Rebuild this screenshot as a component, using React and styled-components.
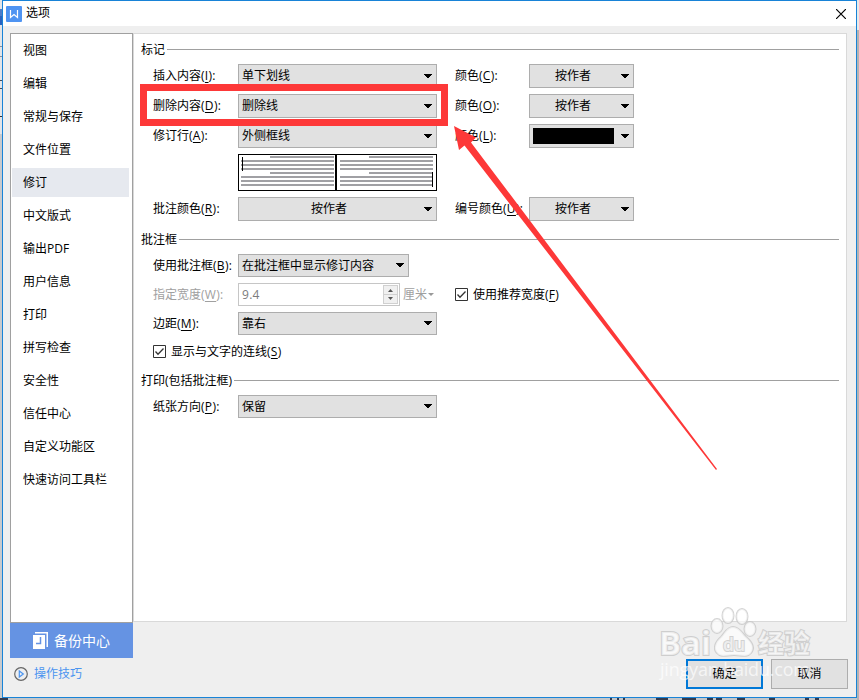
import React from "react";
import styled, { createGlobalStyle, css } from "styled-components";

const Global = createGlobalStyle`
  * { box-sizing: border-box; }
  body {
    margin: 0;
    overflow: hidden;
    font: 12px/16px "Open Sans", "Noto Sans CJK SC", sans-serif;
    color: #000;
  }
  button { font: inherit; color: inherit; }
  u { text-underline-offset: 2px; text-decoration-thickness: 1px; }
`;

const Desktop = styled.div`
  position: relative;
  width: 859px;
  height: 700px;
  padding-left: 2px;
  background:
    linear-gradient(#4c7cc8 0 7px, #2a63bf 7px 16px) 0 9px / 2px 16px no-repeat,
    linear-gradient(#8a8f98, #8a8f98) 0 46px / 2px 1px no-repeat,
    linear-gradient(#8a8f98, #8a8f98) 0 56px / 2px 1px no-repeat,
    linear-gradient(#444b58, #444b58) 0 80px / 2px 1px no-repeat,
    linear-gradient(#444b58, #444b58) 0 88px / 2px 1px no-repeat,
    linear-gradient(#333, #333) 0 116px / 2px 1px no-repeat,
    linear-gradient(#e9e9e9 0 30px, #b3b3b3 30px) 857px 0 / 2px 700px no-repeat,
    linear-gradient(#e2e4e8 0 134px, #c8cacd 134px) 0 0 / 2px 700px no-repeat,
    #c3c6c9;
`;

const Dialog = styled.main`
  display: flex;
  flex-direction: column;
  width: 855px;
  height: 698px;
  border: 1px solid #1883d7;
  background: #efefef;
`;

const TitleBar = styled.header`
  display: flex;
  align-items: center;
  height: 25px;
  padding: 0 10px 0 3px;
  background: #fff;
  svg:last-child { margin-left: auto; }
`;

const Title = styled.h1`
  margin: 0 0 1px 4px;
  font-size: 12px;
  font-weight: 400;
`;

const Body = styled.div`
  display: flex;
  align-items: flex-start;
  padding: 7px 0 0 7px;
`;

const Side = styled.aside`
  width: 123px;
`;

const Nav = styled.nav`
  display: flex;
  flex-direction: column;
  gap: 4px;
  height: 590px;
  padding: 2px 3px 0 1px;
  border: 1px solid #a0a0a0;
  background: #fff;
`;

const NavItem = styled.a`
  flex: none;
  height: 29px;
  padding-left: 11px;
  line-height: 30px;
  white-space: nowrap;
  background: ${(p) => (p.$active ? "#e6e9ef" : "transparent")};
`;

const Backup = styled.button`
  display: flex;
  align-items: center;
  width: 100%;
  height: 35px;
  padding: 0 0 0 23px;
  gap: 6px;
  border: 0;
  background: #6593e3;
  color: #fff;
  font-size: 14px;
`;

const Tips = styled.a`
  display: flex;
  align-items: center;
  gap: 6px;
  height: 32px;
  padding-left: 4px;
  color: #4a94f0;
`;

const Panel = styled.section`
  width: 714px;
  height: 589px;
  padding: 7px 7px 0;
  border: 1px solid #d9d9d9;
  background: #fff;
`;

const Legend = styled.h2`
  display: flex;
  align-items: center;
  gap: 2px;
  height: 17px;
  margin: ${(p) => p.$top || 0}px 0 0;
  font-size: 12px;
  font-weight: 400;
  white-space: nowrap;
  &::after {
    content: "";
    flex: 1;
    height: 1px;
    background: #a0a0a0;
  }
`;

const Row = styled.div`
  display: flex;
  align-items: center;
  height: ${(p) => p.$h || 24}px;
  margin-top: ${(p) => p.$top}px;
  padding-left: 12px;
`;

const Label = styled.label`
  flex: none;
  width: ${(p) => p.$w || 85}px;
  white-space: nowrap;
  color: ${(p) => (p.$off ? "#a0a0a0" : "#000")};
`;

const Access = styled.span`
  letter-spacing: 0.3px;
`;

const SelectBox = styled.button`
  display: flex;
  align-items: center;
  flex: none;
  width: ${(p) => p.$w}px;
  height: 100%;
  margin-right: ${(p) => p.$gap || 0}px;
  padding: 0 4px 0 3px;
  border: 1px solid #adadad;
  background: #e1e1e1;
`;

const Value = styled.span`
  flex: 1;
  padding-right: ${(p) => (p.$center ? 8 : 0)}px;
  white-space: nowrap;
  line-height: 20px;
  text-align: ${(p) => (p.$center ? "center" : "left")};
`;

const Swatch = styled.span`
  width: 81px;
  height: 16px;
  margin-right: auto;
  background: #000;
`;

const NumberField = styled.div`
  display: flex;
  justify-content: space-between;
  align-items: center;
  width: 162px;
  height: 23px;
  padding: 0 1px 0 3px;
  border: 1px solid #c6c6c6;
  color: #7c7c7c;
  letter-spacing: 0.3px;
`;

const Spinner = styled.span`
  display: grid;
  grid-template-rows: 1fr 1fr;
  width: 15px;
  height: 19px;
  border: 1px solid #d0d0d0;
  background: linear-gradient(#d0d0d0, #d0d0d0) 0 8px / 100% 1px no-repeat #f0f0f0;
  svg { margin: auto; }
`;

const Unit = styled.span`
  display: flex;
  align-items: center;
  gap: 1px;
  width: 52px;
  margin-left: 3px;
  color: #a0a0a0;
`;

const Check = styled.label`
  display: flex;
  align-items: center;
  gap: 5px;
  white-space: nowrap;
`;

const Footer = styled.footer`
  display: flex;
  justify-content: flex-end;
  gap: 8px;
  margin: -31px 8px 0 0;
`;

const FootButton = styled.button`
  width: 77px;
  height: 30px;
  padding: 0;
  background: #e1e1e1;
  border: 1px solid #adadad;
  ${(p) => p.$primary && css`border: 2px solid #0078d7;`}
`;

const Overlay = styled.svg`
  position: absolute;
  left: 0;
  top: 0;
  pointer-events: none;
`;

const Preview = styled.svg`
  display: block;
  margin: 6px 0 0 97px;
`;

const NAV = ["视图", "编辑", "常规与保存", "文件位置", "修订", "中文版式", "输出PDF", "用户信息", "打印", "拼写检查", "安全性", "信任中心", "自定义功能区", "快速访问工具栏"];

const Down = () => (
  <svg width="8" height="5" viewBox="0 0 8 5" shapeRendering="crispEdges">
    <path d="M0 0h8v1H7v1H6v1H5v1H3V3H2V2H1V1H0z" fill="#000" />
  </svg>
);

const Select = ({ w = 199, gap, center, children }) => (
  <SelectBox $w={w} $gap={gap}>
    {children === undefined ? <Swatch /> : <Value $center={center}>{children}</Value>}
    <Down />
  </SelectBox>
);

const Key = ({ text, k }) => <>{text}<Access>(<u>{k}</u>)</Access></>;

const CheckIcon = () => (
  <svg width="13" height="13" viewBox="0 0 13 13">
    <path d="M.5.5h12v12H.5z" fill="#fff" stroke="#333" />
    <path d="M2.5 6.5 5 9.2l5.5-5.7" fill="none" stroke="#333" strokeWidth="1.3" />
  </svg>
);

const PageLines = ({ x }) => (
  <g fill="#a0a0a4">
    {[0, 1, 2, 3, 4, 5, 6, 7].map((i) => {
      const inset = i % 4 === 0 ? 29 : 0;
      return <rect key={i} x={x + inset} y={2 + i * 4} width={93 - inset} height="2" />;
    })}
  </g>
);

export default function App() {
  return (
    <Desktop>
      <Global />
      <Dialog>
        <TitleBar>
          <svg width="16" height="16" viewBox="0 0 16 16">
            <rect width="16" height="16" rx="1" fill="#4f94f2" />
            <path d="M4.5 4v7.500L8 8.500l3.500 3V4" fill="none" stroke="#fff" strokeWidth="1.2" />
          </svg>
          <Title>选项</Title>
          <svg width="10" height="10" viewBox="0 0 10 10">
            <path d="m0 0 10 10m0-10L0 10" stroke="#000" strokeWidth="1.2" />
          </svg>
        </TitleBar>
        <Body>
          <Side>
            <Nav>
              {NAV.map((n) => <NavItem key={n} $active={n === "修订"}>{n}</NavItem>)}
            </Nav>
            <Backup>
              <svg width="15" height="17" viewBox="0 0 15 17">
                <path d="M2 0h13v15h-1.500V1.500H2z" fill="#fff" />
                <path d="M0 3h12v14H0z" fill="#fff" />
                <path d="M3 11.500h4.500V5" fill="none" stroke="#6593e3" strokeWidth="1.500" />
              </svg>
              备份中心
            </Backup>
            <Tips>
              <svg width="14" height="14" viewBox="0 0 14 14" fill="none">
                <circle cx="7" cy="7" r="6.300" stroke="#666" strokeWidth="1.200" />
                <path d="M5.300 4v6l4-3z" stroke="#4a94f0" strokeWidth="1.200" />
              </svg>
              操作技巧
            </Tips>
          </Side>
          <Panel>
            <Legend>标记</Legend>
            <Row $top={6}>
              <Label><Key text="插入内容" k="I" />:</Label>
              <Select gap={18}>单下划线</Select>
              <Label $w={74}><Key text="颜色" k="C" />:</Label>
              <Select w={105} center>按作者</Select>
            </Row>
            <Row $top={6}>
              <Label><Key text="删除内容" k="D" />:</Label>
              <Select gap={18}>删除线</Select>
              <Label $w={74}><Key text="颜色" k="O" />:</Label>
              <Select w={105} center>按作者</Select>
            </Row>
            <Row $top={6}>
              <Label><Key text="修订行" k="A" />:</Label>
              <Select gap={18}>外侧框线</Select>
              <Label $w={74}><Key text="颜色" k="L" />:</Label>
              <Select w={105} />
            </Row>
            <Preview width="199" height="37" viewBox="0 0 199 37" shapeRendering="crispEdges">
              <path d="M.5.5h198v36H.5z" fill="#fff" stroke="#000" />
              <path d="M97 0h2v37h-2z" />
              <PageLines x={3} />
              <PageLines x={102} />
              <path d="M4 3h1v14H4zM194 18h1v15h-1z" />
            </Preview>
            <Row $top={6}>
              <Label><Key text="批注颜色" k="R" />:</Label>
              <Select gap={18} center>按作者</Select>
              <Label $w={74}><Key text="编号颜色" k="U" />:</Label>
              <Select w={105} center>按作者</Select>
            </Row>
            <Legend $top={10}>批注框</Legend>
            <Row $top={6} $h={23}>
              <Label><Key text="使用批注框" k="B" />:</Label>
              <Select w={171}>在批注框中显示修订内容</Select>
            </Row>
            <Row $top={6} $h={23}>
              <Label $off><Key text="指定宽度" k="W" />:</Label>
              <NumberField>
                9.4
                <Spinner>
                  <svg width="5" height="3" viewBox="0 0 5 3"><path d="M0 3 2.500 0 5 3z" fill="#555" /></svg>
                  <svg width="5" height="3" viewBox="0 0 5 3"><path d="M0 0 2.500 3 5 0z" fill="#555" /></svg>
                </Spinner>
              </NumberField>
              <Unit>
                厘米
                <svg width="6" height="3" viewBox="0 0 6 3"><path d="M0 0 3 3 6 0z" fill="#999" /></svg>
              </Unit>
              <Check><CheckIcon /><span><Key text="使用推荐宽度" k="F" /></span></Check>
            </Row>
            <Row $top={6} $h={23}>
              <Label><Key text="边距" k="M" />:</Label>
              <Select>靠右</Select>
            </Row>
            <Row $top={8} $h={17}>
              <Check><CheckIcon /><span><Key text="显示与文字的连线" k="S" /></span></Check>
            </Row>
            <Legend $top={12}>打印(包括批注框)</Legend>
            <Row $top={6} $h={23}>
              <Label><Key text="纸张方向" k="P" />:</Label>
              <Select>保留</Select>
            </Row>
          </Panel>
        </Body>
        <Footer>
          <FootButton $primary>确定</FootButton>
          <FootButton>取消</FootButton>
        </Footer>
      </Dialog>
      <Overlay width="859" height="700" viewBox="0 0 859 700">
        <path d="M0 699h8M610 699h2M617 699h2M623 699h2M656 699h12M682 699h14M707 699h6M716 699h6M737 699h8M769 699h6M805 699h4M815 699h4" stroke="#333a4c" strokeWidth="2" />
        <g fill="#fff" fillOpacity=".65" stroke="#c4c4c4" strokeOpacity=".75" strokeWidth="2" paintOrder="stroke">
          <ellipse cx="717" cy="626" rx="5.500" ry="7" />
          <ellipse cx="728" cy="615.500" rx="5.500" ry="7.500" />
          <ellipse cx="742" cy="616.500" rx="5.500" ry="7.500" />
          <ellipse cx="750" cy="629" rx="5.500" ry="7" />
          <path d="M733 627c-6 0-8 6-12 10-6 5-8 12-4 16 4 5 10 2 17 2s13 3 17-2c4-5 1-11-5-16-4-4-7-10-13-10z" />
          <g fontFamily="Open Sans, Noto Sans CJK SC, sans-serif" fontWeight="700">
            <text x="659" y="655" fontSize="33" textLength="52" lengthAdjust="spacingAndGlyphs">Bai</text>
            <text x="723" y="651" fontSize="18" fontWeight="600" textLength="22" lengthAdjust="spacingAndGlyphs">du</text>
            <text x="758" y="653" fontSize="26" textLength="52">经验</text>
          </g>
          <text x="660" y="676" fontFamily="Open Sans, sans-serif" fontSize="18" stroke="none" fillOpacity=".7" textLength="150">jingyan.baidu.com</text>
        </g>
        <path d="M143.500 87.500h301v35h-301z" fill="none" stroke="#fd3838" strokeWidth="7" />
        <path d="M454 126 476 137.500 471 142.500 717 469 716 470 464.500 145.500 459 150z" fill="#fd3838" />
      </Overlay>
    </Desktop>
  );
}
